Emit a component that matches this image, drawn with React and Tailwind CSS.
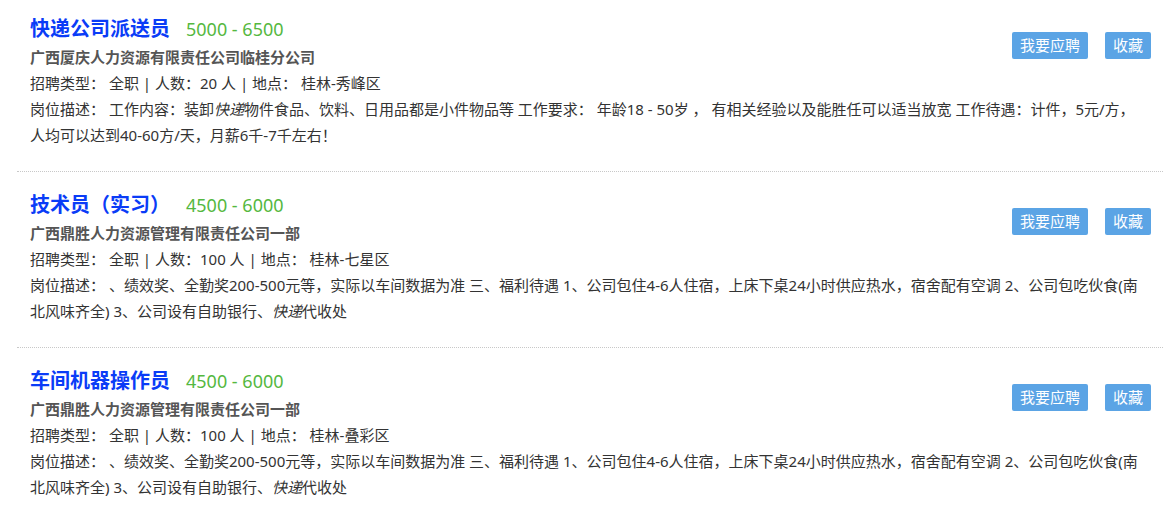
import React from 'react';

const shared = [
  [
    '、绩效奖、全勤奖200-500元等，实际以车间数据为准 三、福利待遇 1、公司包住4-6人住宿，上床下桌24小时供应热水，宿舍配有空调 2、公司包吃伙食(南',
  ],
  ['北风味齐全) 3、公司设有自助银行、', { em: '快递' }, '代收处'],
];

const jobs = [
  {
    title: '快递公司派送员',
    salary: '5000 - 6500',
    company: '广西厦庆人力资源有限责任公司临桂分公司',
    count: '20',
    place: '桂林-秀峰区',
    desc: [
      [
        '工作内容：装卸',
        { em: '快递' },
        '物件食品、饮料、日用品都是小件物品等 工作要求： 年龄18 - 50岁 ， 有相关经验以及能胜任可以适当放宽 工作待遇：计件，5元/方，',
      ],
      ['人均可以达到40-60方/天，月薪6千-7千左右！'],
    ],
  },
  {
    title: '技术员（实习）',
    salary: '4500 - 6000',
    company: '广西鼎胜人力资源管理有限责任公司一部',
    count: '100',
    place: '桂林-七星区',
    desc: shared,
  },
  {
    title: '车间机器操作员',
    salary: '4500 - 6000',
    company: '广西鼎胜人力资源管理有限责任公司一部',
    count: '100',
    place: '桂林-叠彩区',
    desc: shared,
  },
];

function Piece({ d }) {
  if (typeof d === 'string') return <>{d}</>;
  return <em className="italic">{d.em}</em>;
}

function JobItem({ job, first }) {
  return (
    <div className={`border-b border-dotted border-[#c8c8c8] pl-[13px] pr-[12px] pb-[23px] ${first ? 'pt-[14px]' : 'pt-[18px]'}`}>
      <div className="flex justify-between">
        <div>
          <div className="flex items-center h-[30px]">
            <span className="text-[20px] font-bold text-[#0a3cf7]">{job.title}</span>
            <span className="ml-4 text-[18px] text-[#55b83f]">{job.salary}</span>
          </div>
          <div className="text-[15px] font-bold text-[#555] leading-[26px]">{job.company}</div>
          <div className="text-[15px] text-[#333] leading-[26px]">
            招聘类型： 全职 | 人数：{job.count} 人 | 地点： {job.place}
          </div>
        </div>
        <div className="flex gap-[17px] mt-[18px]">
          <button className="h-[27px] px-[8px] rounded-[2px] bg-[#5ba4e5] text-white text-[15px]">我要应聘</button>
          <button className="h-[27px] px-[8px] rounded-[2px] bg-[#5ba4e5] text-white text-[15px]">收藏</button>
        </div>
      </div>
      <div className="text-[15px] text-[#333] leading-[26px] whitespace-nowrap">
        <div>
          岗位描述： {job.desc[0].map((d, i) => (
            <Piece key={i} d={d} />
          ))}
        </div>
        <div>
          {job.desc[1].map((d, i) => (
            <Piece key={i} d={d} />
          ))}
        </div>
      </div>
    </div>
  );
}

export default function App() {
  return (
    <div className="bg-white w-[1175px] h-[515px] overflow-hidden pl-[17px] pr-[12px]" style={{ fontFamily: '"Noto Sans", "Noto Sans CJK SC", sans-serif' }}>
      {jobs.map((job, i) => (
        <JobItem key={i} job={job} first={i === 0} />
      ))}
    </div>
  );
}
